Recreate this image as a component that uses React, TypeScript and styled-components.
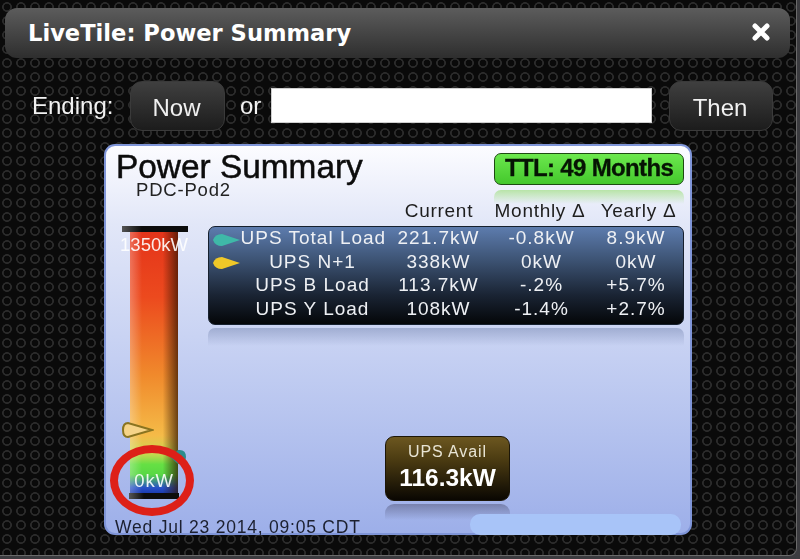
import React from 'react';
import styled, { createGlobalStyle } from 'styled-components';

const GlobalStyle = createGlobalStyle`
  html, body {
    margin: 0;
    padding: 0;
    background: #3c3c40;
    overflow: hidden;
  }
  * {
    box-sizing: border-box;
  }
`;

const Window = styled.div`
  width: 797px;
  height: 556px;
  padding: 8px 6px 0 5px;
  border-right: 1px solid #6a6a6a;
  border-bottom: 1px solid #6a6a6a;
  border-bottom-right-radius: 8px;
  background-color: #0a0a0a;
  background-image: radial-gradient(circle at center, transparent 3px, #2b2b2b 3.6px, #2b2b2b 4.6px, transparent 5.2px);
  background-size: 14px 14px;
  font-family: "Liberation Sans", Arial, sans-serif;
  filter: blur(0.7px);
`;

const TitleBar = styled.header`
  display: flex;
  align-items: center;
  justify-content: space-between;
  height: 50px;
  padding: 0 19px 0 23px;
  border-radius: 12px;
  background: linear-gradient(#5c5c5c, #2e2e2e);
`;

const TitleText = styled.h1`
  margin: 0;
  color: #fff;
  font-family: "DejaVu Sans", Verdana, sans-serif;
  font-size: 22.6px;
  font-weight: 700;
`;

const CloseIcon = styled.svg`
  width: 20px;
  height: 20px;
  margin-top: -2px;
`;

const DateRow = styled.div`
  display: flex;
  align-items: center;
  height: 50px;
  margin-top: 23px;
  padding-left: 27px;
  color: #f2f2f2;
  font-size: 24px;
`;

const EndingLabel = styled.span`
  width: 98px;
  margin-top: -1px;
`;

const OrLabel = styled.span`
  width: 31px;
  margin: -1px 0 0 15px;
`;

const ActionButton = styled.button<{ $width: number }>`
  width: ${p => p.$width}px;
  height: 50px;
  padding: 4px 2px 0 0;
  border: 1px solid #3a3a3a;
  border-radius: 12px;
  background: linear-gradient(#3f3f3f, #1c1c1c);
  color: #f0f0f0;
  font-family: "Liberation Sans", Arial, sans-serif;
  font-size: 24px;
`;

const DateInput = styled.input`
  width: 381px;
  height: 35px;
  margin: -1px 17px 0 0;
  padding: 0 6px;
  border: 1px solid #cfcfcf;
  background: #fff;
`;

const Card = styled.section`
  position: relative;
  width: 588px;
  height: 391px;
  margin: 13px 0 0 99px;
  border: 2px solid #7f95d8;
  border-radius: 11px;
  background: linear-gradient(#fcfcff 0%, #e2e7f8 20%, #c4cff2 55%, #9dafe9 100%);
`;

const CardHeader = styled.div`
  display: flex;
  justify-content: space-between;
  height: 54px;
  padding: 5px 6px 0 10px;
`;

const CardTitle = styled.h2`
  margin: 0;
  color: #0c0c0c;
  font-size: 33.4px;
  font-weight: 400;
  line-height: 31px;
  -webkit-text-stroke: 0.5px #0c0c0c;
`;

const CardSubtitle = styled.div`
  margin-left: 20px;
  color: #222;
  font-size: 18.5px;
  letter-spacing: 0.8px;
  line-height: 15px;
`;

const BadgeColumn = styled.div`
  width: 190px;
`;

const TtlBadge = styled.div`
  height: 32px;
  margin-top: 2px;
  border: 1.5px solid #1d4a12;
  border-radius: 7px;
  background: linear-gradient(#6ce84e, #44c82c);
  color: #061404;
  font-size: 24px;
  font-weight: 700;
  letter-spacing: -0.65px;
  line-height: 28px;
  text-align: center;
  -webkit-text-stroke: 0.3px #061404;
`;

const BadgeReflection = styled.div`
  height: 14px;
  margin-top: 5px;
  border-radius: 7px 7px 0 0;
  background: linear-gradient(#b8e4a8, rgba(200, 230, 200, 0));
`;

const CardBody = styled.div`
  display: flex;
  height: 317px;
`;

const GaugeColumn = styled.div`
  position: relative;
  flex: none;
  width: 102px;
  padding: 26px 0 0 16px;
`;

const GaugeCap = styled.div<{ $width: number; $offset: number }>`
  width: ${p => p.$width}px;
  height: 6px;
  margin-left: ${p => p.$offset}px;
  background: linear-gradient(90deg, #555, #0c0c0c 30%, #0c0c0c);
`;

const GaugeTube = styled.div`
  display: flex;
  flex-direction: column;
  align-items: center;
  justify-content: space-between;
  width: 48px;
  height: 261px;
  margin-left: 8px;
  padding: 3px 0 2px;
  background:
    linear-gradient(90deg, rgba(255, 255, 255, 0.28), rgba(255, 255, 255, 0) 25%, rgba(0, 0, 0, 0) 68%, rgba(50, 20, 0, 0.72)),
    linear-gradient(#e4341a 0%, #ec4a1e 25%, #f08a2c 55%, #f5bb48 78%, #c8d850 85%, #66e044 89%, #58d844 93%, #2850c8 98%, #1c3cb0 100%);
`;

const GaugeLabel = styled.span<{ $spacing: number }>`
  color: #fff;
  font-size: 18.5px;
  letter-spacing: ${p => p.$spacing}px;
  line-height: 20px;
  white-space: nowrap;
  opacity: 0.9;
`;

const GaugeMarker = styled.svg<{ $top: number; $left: number }>`
  position: absolute;
  top: ${p => p.$top}px;
  left: ${p => p.$left}px;
`;

const HighlightRing = styled.div`
  position: absolute;
  top: 245px;
  left: 4px;
  width: 84px;
  height: 71px;
  border: 8px solid #dd2018;
  border-radius: 50%;
`;

const MainColumn = styled.div`
  flex: 1;
  min-width: 0;
  padding-right: 6px;
`;

const ColumnHeaders = styled.div`
  display: grid;
  grid-template-columns: 144px 108px 94px 103px;
  height: 26px;
  padding-left: 33px;
  color: #1e1e1e;
  font-size: 19px;
  letter-spacing: 0.7px;
  line-height: 22px;
  text-align: center;
  white-space: nowrap;
`;

const ColumnHeader = styled.span``;

const LoadTable = styled.div`
  position: relative;
  height: 99px;
  padding-left: 31.5px;
  border: 1.5px solid #16202e;
  border-radius: 7px;
  background: linear-gradient(#5d7cae 0%, #3c5272 35%, #1a2434 70%, #040608 100%);
`;

const LoadRow = styled.div`
  display: grid;
  grid-template-columns: 144px 108px 98px 91px;
  height: 23.6px;
  color: #eef0f4;
  font-size: 19px;
  letter-spacing: 1px;
  line-height: 22px;
  text-align: center;
  white-space: nowrap;
`;

const LoadCell = styled.span``;

const RowMarker = styled.svg<{ $top: number }>`
  position: absolute;
  top: ${p => p.$top}px;
  left: 4px;
`;

const TableReflection = styled.div`
  height: 18px;
  margin-top: 3px;
  border-radius: 7px 7px 0 0;
  background: linear-gradient(rgba(70, 90, 140, 0.32), rgba(150, 165, 220, 0));
`;

const AvailBox = styled.div`
  width: 125px;
  height: 65px;
  margin: 90px 0 0 177px;
  padding-top: 5px;
  border: 1px solid #1c1608;
  border-radius: 9px;
  background: linear-gradient(#6c5720 0%, #4c3c12 35%, #0a0702 100%);
  color: #fff;
  text-align: center;
`;

const AvailLabel = styled.div`
  color: #e8e4d4;
  font-size: 16px;
  letter-spacing: 0.9px;
  line-height: 20px;
`;

const AvailValue = styled.div`
  font-size: 24.5px;
  font-weight: 700;
  line-height: 32px;
`;

const AvailReflection = styled.div`
  width: 125px;
  height: 16px;
  margin: 3px 0 0 177px;
  border-radius: 9px 9px 0 0;
  background: linear-gradient(rgba(60, 60, 90, 0.42), rgba(150, 165, 225, 0));
`;

const Timestamp = styled.div`
  margin-top: 2px;
  padding-left: 9px;
  color: #1c2030;
  font-size: 17.5px;
  letter-spacing: 0.78px;
  line-height: 17px;
  white-space: nowrap;
`;

const ScrollPill = styled.div`
  position: absolute;
  right: 9px;
  bottom: -2px;
  width: 211px;
  height: 21px;
  border-radius: 10px;
  background: #a8c4f8;
`;

const rows = [
  ['UPS Total Load', '221.7kW', '-0.8kW', '8.9kW'],
  ['UPS N+1', '338kW', '0kW', '0kW'],
  ['UPS B Load', '113.7kW', '-.2%', '+5.7%'],
  ['UPS Y Load', '108kW', '-1.4%', '+2.7%'],
];

const App: React.FC = () => (
  <>
    <GlobalStyle />
    <Window>
      <TitleBar>
        <TitleText>LiveTile: Power Summary</TitleText>
        <CloseIcon viewBox="0 0 20 20">
          <path d="M4 4 L16 16 M16 4 L4 16" stroke="#fff" strokeWidth="5" strokeLinecap="round" />
        </CloseIcon>
      </TitleBar>

      <DateRow>
        <EndingLabel>Ending:</EndingLabel>
        <ActionButton $width={95}>Now</ActionButton>
        <OrLabel>or</OrLabel>
        <DateInput type="text" />
        <ActionButton $width={104}>Then</ActionButton>
      </DateRow>

      <Card>
        <CardHeader>
          <div>
            <CardTitle>Power Summary</CardTitle>
            <CardSubtitle>PDC-Pod2</CardSubtitle>
          </div>
          <BadgeColumn>
            <TtlBadge>TTL: 49 Months</TtlBadge>
            <BadgeReflection />
          </BadgeColumn>
        </CardHeader>

        <CardBody>
          <GaugeColumn>
            <GaugeMarker $top={249} $left={64} width="18" height="16" viewBox="0 0 18 16">
              <path d="M0 8 L8 1 Q16 0 16 8 Q16 15 8 15 Z" fill="#2c8c8c" />
            </GaugeMarker>
            <GaugeCap $width={66} $offset={0} />
            <GaugeTube>
              <GaugeLabel $spacing={0}>1350kW</GaugeLabel>
              <GaugeLabel $spacing={0.8}>0kW</GaugeLabel>
            </GaugeTube>
            <GaugeCap $width={50} $offset={7} />
            <GaugeMarker $top={220} $left={15} width="33" height="20" viewBox="0 0 33 20">
              <path d="M31 10 L7 3 Q2 3 2 10 Q2 17 7 17 Z" fill="#f6d488" stroke="#8a7420" strokeWidth="2" />
            </GaugeMarker>
            <HighlightRing />
          </GaugeColumn>

          <MainColumn>
            <ColumnHeaders>
              <span />
              <ColumnHeader>Current</ColumnHeader>
              <ColumnHeader>Monthly Δ</ColumnHeader>
              <ColumnHeader>Yearly Δ</ColumnHeader>
            </ColumnHeaders>
            <LoadTable>
              <RowMarker $top={6} width="28" height="14" viewBox="0 0 28 14">
                <path d="M0 7 Q2 1 9 1 L27 7 L9 13 Q2 13 0 7 Z" fill="#3fb8a8" />
              </RowMarker>
              <RowMarker $top={29} width="28" height="14" viewBox="0 0 28 14">
                <path d="M0 7 Q2 1 9 1 L27 7 L9 13 Q2 13 0 7 Z" fill="#f0c828" />
              </RowMarker>
              {rows.map(row => (
                <LoadRow key={row[0]}>
                  {row.map(cell => (
                    <LoadCell key={cell}>{cell}</LoadCell>
                  ))}
                </LoadRow>
              ))}
            </LoadTable>
            <TableReflection />
            <AvailBox>
              <AvailLabel>UPS Avail</AvailLabel>
              <AvailValue>116.3kW</AvailValue>
            </AvailBox>
            <AvailReflection />
          </MainColumn>
        </CardBody>

        <Timestamp>Wed Jul 23 2014, 09:05 CDT</Timestamp>
        <ScrollPill />
      </Card>
    </Window>
  </>
);

export default App;
